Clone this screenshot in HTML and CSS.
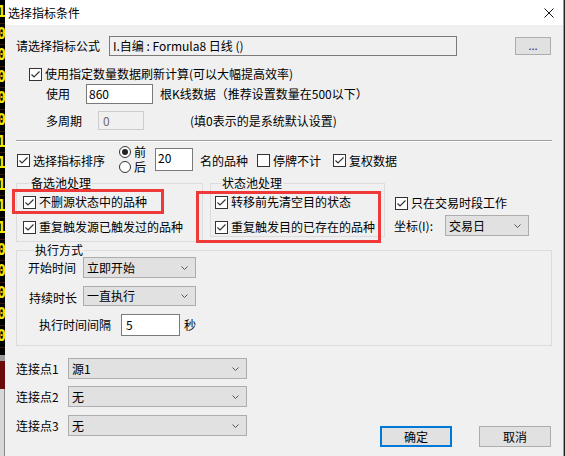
FILE: index.html
```html
<!DOCTYPE html>
<html lang="zh-CN">
<head>
<meta charset="utf-8">
<title>选择指标条件</title>
<link rel="stylesheet" href="styles.css">
</head>
<body>
<div class="screen">
  <div class="backdrop-left">
    <div class="ticker">
      <span>1</span><span>0</span><span>0</span><span>0</span><span>0</span><span>0</span><span>1</span><span>1</span><span>1</span><span>1</span><span>1</span><span>0</span><span>0</span><span>0</span><span>0</span><span>0</span>
    </div>
    <div class="strip-red"></div>
    <div class="strip-gray"></div>
  </div>

  <div class="dialog">
    <div class="titlebar">
      <span class="title">选择指标条件</span>
      <svg class="close" width="10" height="10" viewBox="0 0 10 10"><path d="M0.5 0.5L9.5 9.5M9.5 0.5L0.5 9.5" stroke="#111" stroke-width="1" fill="none"/></svg>
    </div>

    <div class="content">
      <div class="row formula-row">
        <span class="lbl lbl-formula">请选择指标公式</span>
        <div class="field formula">I.自编 : Formula8 日线 ()</div>
        <div class="btn dots">...</div>
      </div>

      <div class="row refresh-row">
        <span class="cb"><svg class="box" viewBox="0 0 13 13"><rect x="0.5" y="0.5" width="12" height="12" fill="#fff" stroke="#333"/><path d="M2.5 6.5L5 9L10.5 3.5" fill="none" stroke="#333" stroke-width="1.2"/></svg><span>使用指定数量数据刷新计算(可以大幅提高效率)</span></span>
      </div>

      <div class="row use-row">
        <span class="lbl lbl-use">使用</span>
        <div class="field num-860">860</div>
        <span class="after-860">根K线数据（推荐设置数量在500以下）</span>
      </div>

      <div class="row period-row">
        <span class="lbl lbl-period">多周期</span>
        <div class="field disabled num-0">0</div>
        <span class="after-0">(填0表示的是系统默认设置)</span>
      </div>

      <div class="separator"></div>

      <div class="row sort-row">
        <span class="cb cb-sort"><svg class="box" viewBox="0 0 13 13"><rect x="0.5" y="0.5" width="12" height="12" fill="#fff" stroke="#333"/><path d="M2.5 6.5L5 9L10.5 3.5" fill="none" stroke="#333" stroke-width="1.2"/></svg><span>选择指标排序</span></span>
        <div class="radios">
          <span class="rb"><svg class="dot" viewBox="0 0 12 12"><circle cx="6" cy="6" r="5.5" fill="#fff" stroke="#333"/><circle cx="6" cy="6" r="3" fill="#222"/></svg><span>前</span></span>
          <span class="rb"><svg class="dot" viewBox="0 0 12 12"><circle cx="6" cy="6" r="5.5" fill="#fff" stroke="#333"/></svg><span>后</span></span>
        </div>
        <div class="field num-20">20</div>
        <span class="after-20">名的品种</span>
        <span class="cb cb-suspend"><svg class="box" viewBox="0 0 13 13"><rect x="0.5" y="0.5" width="12" height="12" fill="#fff" stroke="#333"/></svg><span>停牌不计</span></span>
        <span class="cb cb-adjust"><svg class="box" viewBox="0 0 13 13"><rect x="0.5" y="0.5" width="12" height="12" fill="#fff" stroke="#333"/><path d="M2.5 6.5L5 9L10.5 3.5" fill="none" stroke="#333" stroke-width="1.2"/></svg><span>复权数据</span></span>
      </div>

      <div class="row pools-row">
        <fieldset class="group group-backup">
          <legend>备选池处理</legend>
          <span class="cb pool-cb"><svg class="box" viewBox="0 0 13 13"><rect x="0.5" y="0.5" width="12" height="12" fill="#fff" stroke="#333"/><path d="M2.5 6.5L5 9L10.5 3.5" fill="none" stroke="#333" stroke-width="1.2"/></svg><span>不删源状态中的品种</span></span>
          <span class="cb pool-cb pool-cb2"><svg class="box" viewBox="0 0 13 13"><rect x="0.5" y="0.5" width="12" height="12" fill="#fff" stroke="#333"/><path d="M2.5 6.5L5 9L10.5 3.5" fill="none" stroke="#333" stroke-width="1.2"/></svg><span>重复触发源已触发过的品种</span></span>
        </fieldset>
        <fieldset class="group group-state">
          <legend>状态池处理</legend>
          <span class="cb pool-cb"><svg class="box" viewBox="0 0 13 13"><rect x="0.5" y="0.5" width="12" height="12" fill="#fff" stroke="#333"/><path d="M2.5 6.5L5 9L10.5 3.5" fill="none" stroke="#333" stroke-width="1.2"/></svg><span>转移前先清空目的状态</span></span>
          <span class="cb pool-cb pool-cb2"><svg class="box" viewBox="0 0 13 13"><rect x="0.5" y="0.5" width="12" height="12" fill="#fff" stroke="#333"/><path d="M2.5 6.5L5 9L10.5 3.5" fill="none" stroke="#333" stroke-width="1.2"/></svg><span>重复触发目的已存在的品种</span></span>
        </fieldset>
        <div class="side-col">
          <span class="cb cb-trade"><svg class="box" viewBox="0 0 13 13"><rect x="0.5" y="0.5" width="12" height="12" fill="#fff" stroke="#333"/><path d="M2.5 6.5L5 9L10.5 3.5" fill="none" stroke="#333" stroke-width="1.2"/></svg><span>只在交易时段工作</span></span>
          <div class="row axis-row">
            <span class="lbl lbl-axis">坐标(I):</span>
            <div class="select sel-axis"><span>交易日</span><svg class="chev" width="7" height="4" viewBox="0 0 7 4"><path d="M0.5 0.5L3.5 3.5L6.5 0.5" fill="none" stroke="#555"/></svg></div>
          </div>
        </div>
      </div>

      <fieldset class="group group-exec">
        <legend>执行方式</legend>
        <div class="row exec-row">
          <span class="lbl lbl-exec">开始时间</span>
          <div class="select sel-exec"><span>立即开始</span><svg class="chev" width="7" height="4" viewBox="0 0 7 4"><path d="M0.5 0.5L3.5 3.5L6.5 0.5" fill="none" stroke="#555"/></svg></div>
        </div>
        <div class="row exec-row exec-row2">
          <span class="lbl lbl-exec lbl-exec2">持续时长</span>
          <div class="select sel-exec sel-exec2"><span>一直执行</span><svg class="chev" width="7" height="4" viewBox="0 0 7 4"><path d="M0.5 0.5L3.5 3.5L6.5 0.5" fill="none" stroke="#555"/></svg></div>
        </div>
        <div class="row interval-row">
          <span class="lbl lbl-interval">执行时间间隔</span>
          <div class="field num-5">5</div>
          <span class="sec">秒</span>
        </div>
      </fieldset>

      <div class="row bottom-row">
        <div class="links">
          <div class="row link-row">
            <span class="lbl lbl-link">连接点1</span>
            <div class="select sel-link"><span>源1</span><svg class="chev" width="7" height="4" viewBox="0 0 7 4"><path d="M0.5 0.5L3.5 3.5L6.5 0.5" fill="none" stroke="#555"/></svg></div>
          </div>
          <div class="row link-row">
            <span class="lbl lbl-link">连接点2</span>
            <div class="select sel-link"><span>无</span><svg class="chev" width="7" height="4" viewBox="0 0 7 4"><path d="M0.5 0.5L3.5 3.5L6.5 0.5" fill="none" stroke="#555"/></svg></div>
          </div>
          <div class="row link-row link-row3">
            <span class="lbl lbl-link">连接点3</span>
            <div class="select sel-link"><span>无</span><svg class="chev" width="7" height="4" viewBox="0 0 7 4"><path d="M0.5 0.5L3.5 3.5L6.5 0.5" fill="none" stroke="#555"/></svg></div>
          </div>
        </div>
        <div class="actions">
          <div class="btn ok">确定</div>
          <div class="btn cancel">取消</div>
        </div>
      </div>
    </div>

    <div class="mark mark-1"></div>
    <div class="mark mark-2"></div>
  </div>

  <div class="backdrop-right"></div>
</div>
</body>
</html>
```

FILE: styles.css
```css
* { box-sizing: border-box; }
html, body { margin: 0; padding: 0; }
body {
  width: 565px;
  height: 456px;
  overflow: hidden;
  background: #000;
  color: #000;
  font-family: "Noto Sans CJK SC", "Noto Sans", sans-serif;
  font-size: 12px;
  line-height: 14px;
}

.screen { display: flex; height: 456px; }

/* background application strips */
.backdrop-left {
  width: 5px;
  display: flex;
  flex-direction: column;
  overflow: hidden;
  background: #000;
}
.ticker {
  height: 355px;
  display: flex;
  flex-direction: column;
  padding-top: 2px;
  margin-left: -3px;
}
.ticker span {
  height: 21.6px;
  line-height: 20px;
  font-family: "DejaVu Sans Mono", monospace;
  font-size: 15px;
  font-weight: bold;
  color: #f2e600;
  border-bottom: 1px solid #3a1a0c;
}
.strip-red { height: 34px; background: #6a0a0a; border-top: 6px solid #9a9a9a; }
.strip-gray { flex: 1; background: #d8d8d8; border-right: 1px solid #888; }

.backdrop-right {
  width: 2px;
  background: #222;
  border-left: 1px solid #9a9a9a;
}

.dialog {
  width: 558px;
  position: relative;
  background: #f0f0f0;
}

.titlebar {
  height: 25px;
  background: #fff;
  display: flex;
  align-items: center;
  padding-left: 3px;
  padding-right: 9px;
}
.title { font-size: 12px; line-height: 14px; color: #000; }
.close { margin-left: auto; }

.content {
  padding: 11px 11px 0 11px;
  display: flex;
  flex-direction: column;
}

.row { display: flex; align-items: center; }
.lbl { white-space: nowrap; }

.field {
  background: #fff;
  border: 1px solid #7a7a7a;
  padding-left: 2px;
  display: flex;
  align-items: center;
  white-space: nowrap;
}
.field.disabled { background: #f0f0f0; border-color: #cccccc; color: #6d6d6d; }

.btn {
  background: #e1e1e1;
  border: 1px solid #adadad;
  display: flex;
  align-items: center;
  justify-content: center;
}

.select {
  background: #e1e1e1;
  border: 1px solid #adadad;
  display: flex;
  align-items: center;
  padding-left: 3px;
  padding-right: 7px;
}
.select .chev { margin-left: auto; }

.cb { display: flex; align-items: center; white-space: nowrap; }
.cb .box { width: 13px; height: 13px; margin-right: 3px; flex: none; }
.rb { display: flex; align-items: center; height: 14px; line-height: 14px; }
.rb .dot { width: 12px; height: 12px; margin-right: 3px; flex: none; }

/* row 1 */
.formula-row { height: 20px; }
.lbl-formula { width: 93px; }
.formula { width: 348px; height: 20px; background: #f0f0f0; padding-left: 3px; }
.dots { margin-left: auto; margin-right: 1px; width: 36px; height: 18px; color: #1a1a6a; font-size: 11px; padding-bottom: 3px; }

/* refresh options */
.refresh-row { margin-top: 11px; height: 14px; padding-left: 13px; }
.use-row { margin-top: 3px; height: 20px; padding-left: 30px; }
.lbl-use { width: 40px; }
.num-860 { width: 67px; height: 20px; }
.after-860 { margin-left: 7px; }
.period-row { margin-top: 7px; height: 19px; padding-left: 30px; }
.lbl-period { width: 52px; }
.num-0 { width: 46px; height: 19px; padding-left: 4px; }
.after-0 { margin-left: 46px; }

.separator {
  margin-top: 10px;
  height: 2px;
  border-top: 1px solid #a0a0a0;
  border-bottom: 1px solid #fff;
}

/* sort row */
.sort-row { margin-top: 4px; height: 27px; }
.cb-sort { margin-left: 1px; margin-top: 2px; }
.radios { display: flex; flex-direction: column; gap: 1px; margin-left: 14px; }
.num-20 { margin-left: 9px; width: 38px; height: 23px; align-items: flex-start; padding-top: 2px; }
.after-20 { margin-left: 7px; margin-top: 2px; }
.cb-suspend { margin-left: 9px; margin-top: 2px; }
.cb-adjust { margin-left: 12px; margin-top: 2px; }

/* group boxes */
.group {
  margin: 0;
  padding: 0;
  border: 1px solid #dcdcdc;
  min-width: 0;
  display: flex;
  flex-direction: column;
}
.group legend { padding: 0 1px; line-height: 14px; font-size: 12px; }

.pools-row { margin-top: 3px; align-items: flex-start; }
.group-backup { width: 187px; height: 66px; padding-left: 6px; }
.group-backup legend { margin-left: 7px; }
.group-state { width: 175px; height: 61px; margin-left: 7px; padding-left: 4px; }
.group-state legend { margin-left: 6px; }
.pool-cb { margin-top: 5px; height: 14px; }
.pool-cb2 { margin-top: 11px; }

.side-col { margin-left: 9px; display: flex; flex-direction: column; }
.cb-trade { margin-top: 20px; height: 14px; margin-left: 1px; }
.axis-row { margin-top: 5px; }
.lbl-axis { width: 51px; }
.sel-axis { width: 84px; height: 21px; }

/* execution group */
.group-exec { margin-top: 1px; height: 103px; padding-left: 11px; }
.group-exec legend { margin-left: 6px; }
.exec-row { height: 21px; }
.lbl-exec { width: 55px; }
.lbl-exec2 { padding-left: 1px; margin-top: 3px; }
.sel-exec { width: 113px; height: 21px; }
.exec-row2 { margin-top: 8px; height: 20px; }
.sel-exec2 { height: 20px; }
.interval-row { margin-top: 8px; height: 22px; padding-left: 11px; }
.lbl-interval { width: 82px; }
.num-5 { width: 59px; height: 22px; padding-left: 4px; }
.sec { margin-left: 4px; }

/* bottom */
.bottom-row { margin-top: 12px; align-items: flex-start; }
.links { display: flex; flex-direction: column; gap: 7px; }
.link-row3 { margin-top: 1px; }
.lbl-link { width: 52px; }
.sel-link { width: 179px; height: 21px; }
.actions { margin-left: auto; margin-right: 1px; margin-top: 68px; display: flex; gap: 27px; }
.ok { width: 72px; height: 21px; border: 2px solid #0078d7; }
.cancel { width: 72px; height: 21px; }

/* red annotation frames drawn over the dialog */
.mark { position: absolute; border: 3px solid #ef3838; }
.mark-1 { left: 7px; top: 189px; width: 152px; height: 25px; }
.mark-2 { left: 191px; top: 191px; width: 185px; height: 52px; }
```
